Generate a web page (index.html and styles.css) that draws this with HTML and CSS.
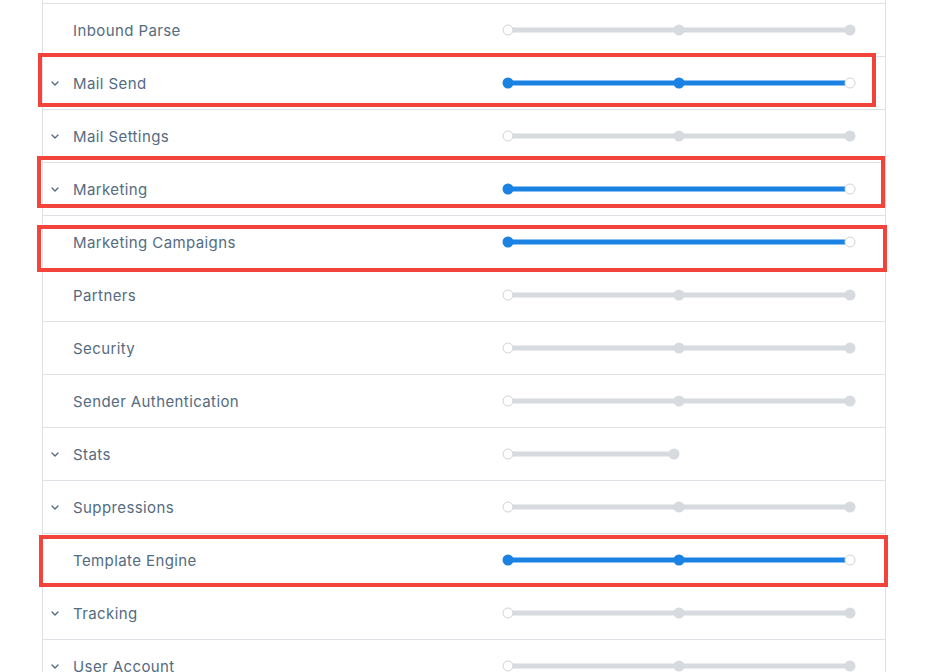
FILE: index.html
```html
<!DOCTYPE html>
<html>
<head>
<meta charset="utf-8">
<link rel="stylesheet" href="styles.css">
</head>
<body>
<div class="page">
  <div class="list">
    <div class="row"><span class="chev"></span><span class="label">Inbound Parse</span>
      <svg class="slider" viewBox="0 0 362 16"><line class="trk" x1="7" y1="8" x2="349" y2="8"/><circle class="dot" cx="178" cy="8" r="5.5"/><circle class="dot" cx="349" cy="8" r="5.5"/><circle class="open" cx="7" cy="8" r="5"/></svg></div>
    <div class="row"><span class="chev"><svg viewBox="0 0 8 5"><path d="M1 1l3 3 3-3"/></svg></span><span class="label">Mail Send</span>
      <svg class="slider" viewBox="0 0 362 16"><line class="blue" x1="7" y1="8" x2="344" y2="8"/><circle class="bdot" cx="7" cy="8" r="5.5"/><circle class="bdot" cx="178" cy="8" r="5.5"/><circle class="open" cx="349" cy="8" r="5"/></svg></div>
    <div class="row"><span class="chev"><svg viewBox="0 0 8 5"><path d="M1 1l3 3 3-3"/></svg></span><span class="label">Mail Settings</span>
      <svg class="slider" viewBox="0 0 362 16"><line class="trk" x1="7" y1="8" x2="349" y2="8"/><circle class="dot" cx="178" cy="8" r="5.5"/><circle class="dot" cx="349" cy="8" r="5.5"/><circle class="open" cx="7" cy="8" r="5"/></svg></div>
    <div class="row"><span class="chev"><svg viewBox="0 0 8 5"><path d="M1 1l3 3 3-3"/></svg></span><span class="label">Marketing</span>
      <svg class="slider" viewBox="0 0 362 16"><line class="blue" x1="7" y1="8" x2="344" y2="8"/><circle class="bdot" cx="7" cy="8" r="5.5"/><circle class="open" cx="349" cy="8" r="5"/></svg></div>
    <div class="row"><span class="chev"></span><span class="label">Marketing Campaigns</span>
      <svg class="slider" viewBox="0 0 362 16"><line class="blue" x1="7" y1="8" x2="344" y2="8"/><circle class="bdot" cx="7" cy="8" r="5.5"/><circle class="open" cx="349" cy="8" r="5"/></svg></div>
    <div class="row"><span class="chev"></span><span class="label">Partners</span>
      <svg class="slider" viewBox="0 0 362 16"><line class="trk" x1="7" y1="8" x2="349" y2="8"/><circle class="dot" cx="178" cy="8" r="5.5"/><circle class="dot" cx="349" cy="8" r="5.5"/><circle class="open" cx="7" cy="8" r="5"/></svg></div>
    <div class="row"><span class="chev"></span><span class="label">Security</span>
      <svg class="slider" viewBox="0 0 362 16"><line class="trk" x1="7" y1="8" x2="349" y2="8"/><circle class="dot" cx="178" cy="8" r="5.5"/><circle class="dot" cx="349" cy="8" r="5.5"/><circle class="open" cx="7" cy="8" r="5"/></svg></div>
    <div class="row"><span class="chev"></span><span class="label">Sender Authentication</span>
      <svg class="slider" viewBox="0 0 362 16"><line class="trk" x1="7" y1="8" x2="349" y2="8"/><circle class="dot" cx="178" cy="8" r="5.5"/><circle class="dot" cx="349" cy="8" r="5.5"/><circle class="open" cx="7" cy="8" r="5"/></svg></div>
    <div class="row"><span class="chev"><svg viewBox="0 0 8 5"><path d="M1 1l3 3 3-3"/></svg></span><span class="label">Stats</span>
      <svg class="slider" viewBox="0 0 362 16"><line class="trk" x1="7" y1="8" x2="173" y2="8"/><circle class="dot" cx="173" cy="8" r="5.5"/><circle class="open" cx="7" cy="8" r="5"/></svg></div>
    <div class="row"><span class="chev"><svg viewBox="0 0 8 5"><path d="M1 1l3 3 3-3"/></svg></span><span class="label">Suppressions</span>
      <svg class="slider" viewBox="0 0 362 16"><line class="trk" x1="7" y1="8" x2="349" y2="8"/><circle class="dot" cx="178" cy="8" r="5.5"/><circle class="dot" cx="349" cy="8" r="5.5"/><circle class="open" cx="7" cy="8" r="5"/></svg></div>
    <div class="row"><span class="chev"></span><span class="label">Template Engine</span>
      <svg class="slider" viewBox="0 0 362 16"><line class="blue" x1="7" y1="8" x2="344" y2="8"/><circle class="bdot" cx="7" cy="8" r="5.5"/><circle class="bdot" cx="178" cy="8" r="5.5"/><circle class="open" cx="349" cy="8" r="5"/></svg></div>
    <div class="row"><span class="chev"><svg viewBox="0 0 8 5"><path d="M1 1l3 3 3-3"/></svg></span><span class="label">Tracking</span>
      <svg class="slider" viewBox="0 0 362 16"><line class="trk" x1="7" y1="8" x2="349" y2="8"/><circle class="dot" cx="178" cy="8" r="5.5"/><circle class="dot" cx="349" cy="8" r="5.5"/><circle class="open" cx="7" cy="8" r="5"/></svg></div>
    <div class="row"><span class="chev"><svg viewBox="0 0 8 5"><path d="M1 1l3 3 3-3"/></svg></span><span class="label">User Account</span>
      <svg class="slider" viewBox="0 0 362 16"><line class="trk" x1="7" y1="8" x2="349" y2="8"/><circle class="dot" cx="178" cy="8" r="5.5"/><circle class="dot" cx="349" cy="8" r="5.5"/><circle class="open" cx="7" cy="8" r="5"/></svg></div>
  </div>
  <div class="mark mark-mail"></div>
  <div class="mark mark-marketing"></div>
  <div class="mark mark-campaigns"></div>
  <div class="mark mark-template"></div>
</div>
</body>
</html>
```

FILE: styles.css
```css
html, body {
  margin: 0;
  padding: 0;
  background: #ffffff;
  overflow: hidden;
}
body {
  font-family: "Inter", "Open Sans", sans-serif;
  color: #546b81;
}
.page {
  position: relative;
  width: 935px;
  height: 672px;
  overflow: hidden;
}
.list {
  margin-left: 42px;
  width: 842px;
  border-left: 1px solid #dde1e5;
  border-right: 1px solid #dde1e5;
  padding-top: 3px;
}
.row {
  display: flex;
  align-items: center;
  height: 52px;
  border-top: 1px solid #dde1e5;
}
.chev {
  width: 30px;
  display: flex;
  justify-content: center;
  padding-right: 6px;
  box-sizing: border-box;
}
.chev svg {
  width: 8px;
  height: 5px;
  fill: none;
  stroke: #546b81;
  stroke-width: 1.4;
  stroke-linecap: round;
  stroke-linejoin: round;
}
.label {
  flex: 1;
  font-size: 15px;
  letter-spacing: 0.4px;
}
.slider {
  width: 362px;
  height: 16px;
  margin-right: 22px;
}
.trk {
  stroke: #d7dadf;
  stroke-width: 5;
}
.blue {
  stroke: #1a82e2;
  stroke-width: 5;
}
.dot {
  fill: #d7dadf;
}
.bdot {
  fill: #1a82e2;
}
.open {
  fill: #ffffff;
  stroke: #cfd3d8;
  stroke-width: 1;
}
.mark {
  position: absolute;
  border: 4px solid #f2443a;
  box-sizing: border-box;
}
.mark-mail {
  left: 38px;
  top: 53px;
  width: 838px;
  height: 54px;
}
.mark-marketing {
  left: 37px;
  top: 156px;
  width: 848px;
  height: 52px;
}
.mark-campaigns {
  left: 37px;
  top: 225px;
  width: 850px;
  height: 47px;
}
.mark-template {
  left: 39px;
  top: 535px;
  width: 849px;
  height: 52px;
}
```
